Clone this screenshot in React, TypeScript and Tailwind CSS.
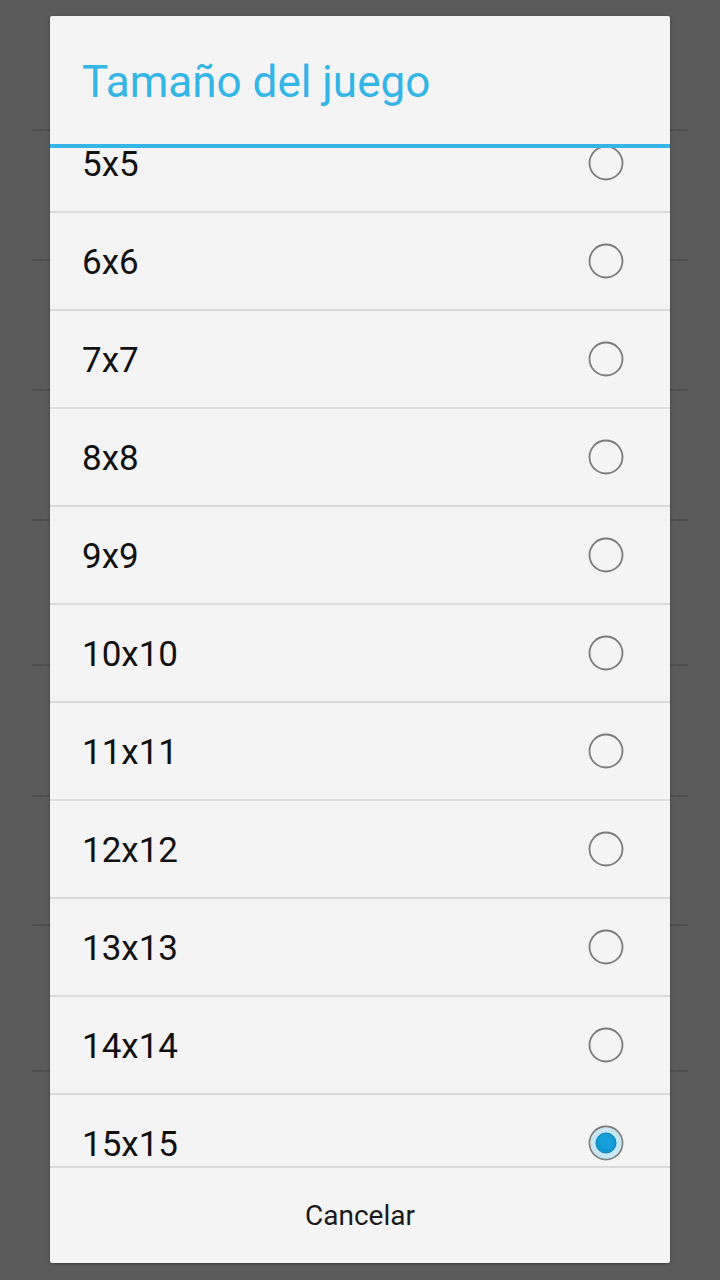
import { useState } from 'react';

const sizes = ['5x5', '6x6', '7x7', '8x8', '9x9', '10x10', '11x11', '12x12', '13x13', '14x14', '15x15'];

// rows of the dimmed screen behind the dialog (height includes the 2px divider)
const backRows = [131, 130, 130, 130, 145, 131, 129, 146];

const Radio = ({ checked }: { checked: boolean }) => (
  <svg width="36" height="36" viewBox="0 0 36 36" className="shrink-0">
    <circle cx="18" cy="18" r="16.5" fill="none" stroke="#7c7c7c" strokeWidth="1.8" />
    {checked && (
      <>
        <circle cx="18" cy="18" r="15.4" fill="#c4e6f5" />
        <circle cx="18" cy="18" r="10" fill="#0f97d4" stroke="#0a7fb3" strokeWidth="1" />
        <circle cx="18" cy="16.5" r="7.5" fill="#1aa3df" opacity="0.6" />
      </>
    )}
  </svg>
);

export default function App() {
  const [selected, setSelected] = useState('15x15');

  return (
    <div className="relative w-[720px] h-[1280px] overflow-hidden bg-[#5b5b5b] font-['Roboto',sans-serif]">
      {/* dimmed screen behind */}
      <div className="flex flex-col">
        {backRows.map((h, i) => (
          <div key={i} className="mx-8 border-b-2 border-[#4e4e4e]" style={{ height: h }} />
        ))}
      </div>

      {/* dialog */}
      <div className="absolute left-[50px] top-[16px] w-[620px] h-[1247px] bg-[#f4f4f4] rounded-[2px] shadow-[0_1px_3px_rgba(0,0,0,0.35)] flex flex-col overflow-hidden">
        <div className="h-[128px] shrink-0 flex items-center pl-8 pt-1">
          <span className="text-[44px] leading-none text-[#33b5e5]">Tamaño del juego</span>
        </div>
        <div className="h-[4px] shrink-0 bg-[#33b5e5]" />

        <div className="flex-1 overflow-hidden">
          <div className="mt-[-33px] flex flex-col">
            {sizes.map((s) => (
              <button
                key={s}
                onClick={() => setSelected(s)}
                className="h-[98px] shrink-0 flex items-center justify-between pl-8 pr-[46px] border-b-2 border-[#dadada] text-left"
              >
                <span className="text-[35px] leading-none text-[#111] pt-[2px]">{s}</span>
                <Radio checked={selected === s} />
              </button>
            ))}
          </div>
        </div>

        <div className="h-[2px] shrink-0 bg-[#dadada]" />
        <div className="h-[95px] shrink-0 flex items-center justify-center">
          <span className="text-[28px] leading-none text-[#1a1a1a]">Cancelar</span>
        </div>
      </div>
    </div>
  );
}
